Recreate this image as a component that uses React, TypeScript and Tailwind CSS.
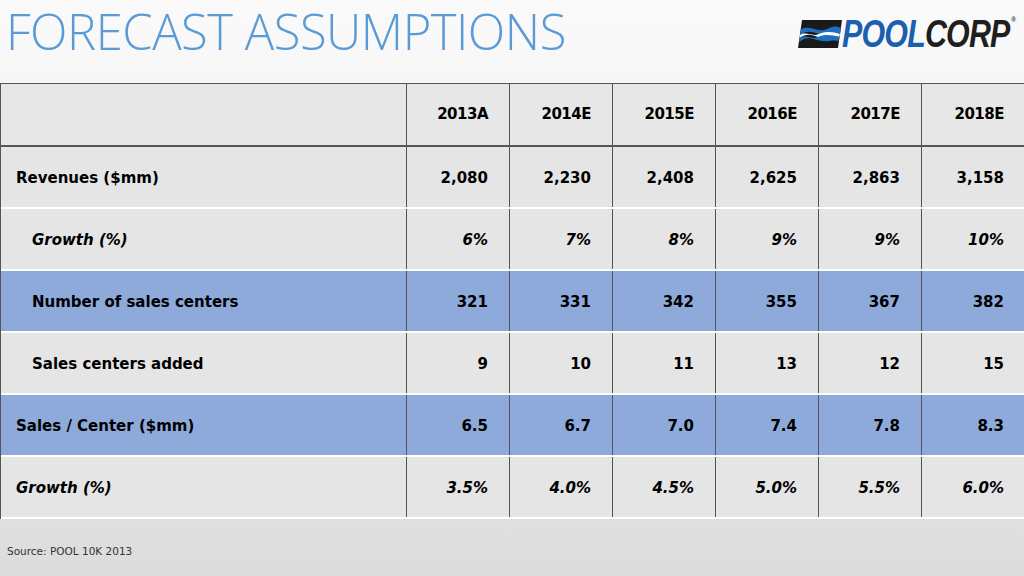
const years = ['2013A', '2014E', '2015E', '2016E', '2017E', '2018E'];

interface Row {
  label: string;
  values: string[];
  italic?: boolean;
  blue?: boolean;
  indent: 'sm' | 'lg';
}

const rows: Row[] = [
  { label: 'Revenues ($mm)', values: ['2,080', '2,230', '2,408', '2,625', '2,863', '3,158'], indent: 'sm' },
  { label: 'Growth (%)', values: ['6%', '7%', '8%', '9%', '9%', '10%'], italic: true, indent: 'lg' },
  { label: 'Number of sales centers', values: ['321', '331', '342', '355', '367', '382'], blue: true, indent: 'lg' },
  { label: 'Sales centers added', values: ['9', '10', '11', '13', '12', '15'], indent: 'lg' },
  { label: 'Sales / Center ($mm)', values: ['6.5', '6.7', '7.0', '7.4', '7.8', '8.3'], blue: true, indent: 'sm' },
  { label: 'Growth (%)', values: ['3.5%', '4.0%', '4.5%', '5.0%', '5.5%', '6.0%'], italic: true, indent: 'sm' },
];

function Logo() {
  return (
    <div className="flex items-center">
      <svg width="44" height="28" viewBox="0 0 44 28" className="shrink-0">
        <polygon points="4,0 44,0 40,28 0,28" fill="#1a1a1a" />
        <path d="M3 9 C 12 5, 20 13, 29 9 S 40 7, 43 8 L 42 14 C 36 12, 30 17, 21 14 S 8 11, 2 15 Z" fill="#1f6fc0" />
        <path d="M2 15 C 8 11, 14 17, 21 14 S 36 12, 42 14 L 41 17 C 35 15, 29 20, 20 17 S 8 14, 1.6 18 Z" fill="#ffffff" />
        <path d="M1.6 18 C 8 14, 14 20, 20 17 S 35 15, 41 17 L 40.5 21 C 34 19, 28 23, 19 20 S 7 18, 1 22 Z" fill="#1f6fc0" />
      </svg>
      <div className="relative w-[176px]">
        <div className="flex origin-left scale-x-[0.8] items-start whitespace-nowrap font-['Liberation_Sans',sans-serif] text-[38px] font-bold italic leading-none tracking-[-1px]">
          <span className="text-[#1b5fae]">POOL</span>
          <span className="text-[#1f1f1f]">CORP</span>
          <span className="ml-[2px] mt-[1px] text-[8px] not-italic text-[#333]">®</span>
        </div>
      </div>
    </div>
  );
}

export default function App() {
  return (
    <div className="flex h-[576px] w-[1024px] flex-col overflow-hidden bg-gradient-to-b from-[#fafafa] via-[#eeeeee] to-[#dcdcdc] font-['DejaVu_Sans',sans-serif]">
      {/* Header */}
      <div className="flex h-[83px] shrink-0 items-start justify-between">
        <h1 className="ml-[6px] w-[580px] shrink-0 whitespace-nowrap font-['Open_Sans',sans-serif] text-[49px] font-light leading-[62px] tracking-[-0.5px] text-[#5b9bd5]">
          FORECAST ASSUMPTIONS
        </h1>
        <div className="mr-[6px] mt-[15px]">
          <Logo />
        </div>
      </div>

      {/* Table */}
      <div className="border-l border-t border-[#555] text-[15px] font-bold text-black">
        <div className="grid h-[63px] grid-cols-[405px_repeat(5,103px)_104px] border-b-2 border-[#555] bg-[#e7e7e7]">
          <div />
          {years.map((y) => (
            <div key={y} className="flex items-center justify-end border-l border-[#555] pr-[21px] tracking-[-0.5px]">
              {y}
            </div>
          ))}
        </div>
        {rows.map((row, i) => (
          <div
            key={i}
            className={`grid h-[62px] grid-cols-[405px_repeat(5,103px)_104px] border-b-2 border-white ${
              row.blue ? 'bg-[#8eaadb]' : 'bg-[#e5e5e5]'
            } ${row.italic ? 'italic' : ''}`}
          >
            <div className={`flex items-center pt-[3px] ${row.indent === 'lg' ? 'pl-[31px]' : 'pl-[15px]'}`}>{row.label}</div>
            {row.values.map((v, j) => (
              <div key={j} className="flex items-center justify-end border-l border-[#555] pr-[21px] pt-[3px]">
                {v}
              </div>
            ))}
          </div>
        ))}
      </div>

      <div className="ml-[7px] mt-[25px] text-[10.5px] text-[#333]">Source: POOL 10K 2013</div>
    </div>
  );
}
